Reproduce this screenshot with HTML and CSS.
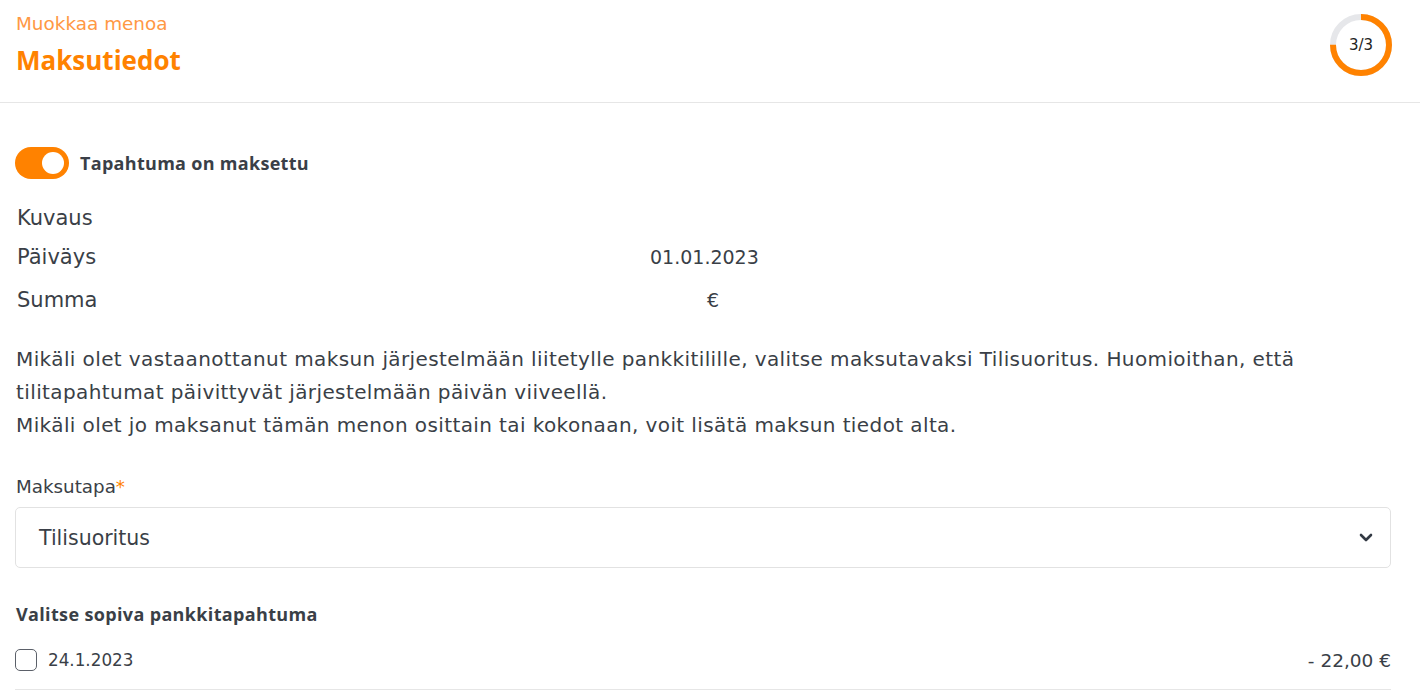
FILE: index.html
```html
<!DOCTYPE html>
<html lang="fi">
<head>
<meta charset="utf-8">
<title>Maksutiedot</title>
<link rel="stylesheet" href="styles.css">
</head>
<body>
<header class="page-head">
  <div class="titles">
    <div class="subtitle">Muokkaa menoa</div>
    <h1 class="title">Maksutiedot</h1>
  </div>
  <div class="steps">
    <svg class="ring" width="62" height="62" viewBox="0 0 62 62">
      <circle cx="31" cy="31" r="28" fill="none" stroke="#e6e7ea" stroke-width="6"/>
      <circle cx="31" cy="31" r="28" fill="none" stroke="#ff8200" stroke-width="6"
        stroke-dasharray="131.95 175.93" transform="rotate(-90 31 31)"/>
    </svg>
    <span class="steps-label">3/3</span>
  </div>
</header>

<main class="content">
  <label class="switch-row">
    <span class="switch"><span class="knob"></span></span>
    <span class="switch-label">Tapahtuma on maksettu</span>
  </label>

  <dl class="facts">
    <dt>Kuvaus</dt><dd></dd>
    <dt>Päiväys</dt><dd>01.01.2023</dd>
    <dt>Summa</dt><dd class="amount">€</dd>
  </dl>

  <p class="info">Mikäli olet vastaanottanut maksun järjestelmään liitetylle pankkitilille, valitse maksutavaksi Tilisuoritus. Huomioithan, että tilitapahtumat päivittyvät järjestelmään päivän viiveellä.<br>Mikäli olet jo maksanut tämän menon osittain tai kokonaan, voit lisätä maksun tiedot alta.</p>

  <div class="field">
    <div class="field-label">Maksutapa<span class="req">*</span></div>
    <div class="select">
      <span>Tilisuoritus</span>
      <svg class="chevron" width="14" height="9" viewBox="0 0 14 9"><path d="M2 2l5 5 5-5" fill="none" stroke="#333a44" stroke-width="2.6" stroke-linecap="round" stroke-linejoin="round"/></svg>
    </div>
  </div>

  <h2 class="section-title">Valitse sopiva pankkitapahtuma</h2>
  <div class="tx-row">
    <span class="checkbox"></span>
    <span class="tx-date">24.1.2023</span>
    <span class="tx-sum">- 22,00 €</span>
  </div>
</main>
</body>
</html>
```
FILE: styles.css
```css
* { box-sizing: border-box; }

body {
  margin: 0;
  font-family: "DejaVu Sans", "Open Sans", sans-serif;
  color: #3a3f47;
  background: #fff;
}

.page-head {
  display: flex;
  justify-content: space-between;
  align-items: flex-start;
  padding: 12px 28px 0 16px;
  height: 103px;
  border-bottom: 1px solid #e6e6e6;
}

.subtitle {
  color: #ff9844;
  font-size: 18.4px;
  line-height: 24px;
}

.title {
  margin: 8px 0 0;
  font-family: "Open Sans", sans-serif;
  color: #ff8200;
  font-size: 26px;
  font-weight: 700;
  line-height: 32px;
}

.steps {
  position: relative;
  width: 62px;
  height: 62px;
  margin-top: 2px;
}

.ring { display: block; }

.steps-label {
  position: absolute;
  inset: 0;
  display: flex;
  align-items: center;
  justify-content: center;
  font-size: 15px;
  color: #222;
}

.content {
  padding: 44px 29px 0 15px;
}

.switch-row {
  display: flex;
  align-items: center;
  gap: 11px;
}

.switch {
  width: 54px;
  height: 32px;
  border-radius: 16px;
  background: #ff8200;
  display: flex;
  align-items: center;
  justify-content: flex-end;
  padding-right: 5px;
}

.knob {
  width: 22px;
  height: 22px;
  border-radius: 50%;
  background: #fff;
}

.switch-label {
  font-family: "Open Sans", sans-serif;
  font-size: 18px;
  font-weight: 700;
  letter-spacing: 0.3px;
  color: #3a3f47;
}

.facts {
  display: grid;
  grid-template-columns: 633px 1fr;
  margin: 26px 0 0 2px;
  font-size: 21px;
  line-height: 26px;
}

.facts dt, .facts dd { margin: 0; }
.facts dd { font-size: 19px; }
.facts dt:nth-of-type(2), .facts dd:nth-of-type(2) { margin-top: 13px; }
.facts dt:nth-of-type(3), .facts dd:nth-of-type(3) { margin-top: 17px; }

.amount { padding-left: 57px; }

.info {
  margin: 30px 0 0 1px;
  font-size: 20px;
  letter-spacing: 0.4px;
  line-height: 33px;
}

.field { margin-top: 34px; }

.field-label {
  font-size: 18.3px;
  line-height: 22px;
  padding-left: 1px;
}

.req { color: #ff8200; }

.select {
  margin-top: 9px;
  height: 61px;
  border: 1px solid #e2e2e2;
  border-radius: 5px;
  display: flex;
  align-items: center;
  justify-content: space-between;
  padding: 0 17px 0 23px;
  font-size: 20.5px;
}

.section-title {
  margin: 34px 0 0 1px;
  font-family: "Open Sans", sans-serif;
  font-size: 18px;
  font-weight: 700;
  letter-spacing: 0.35px;
  line-height: 24px;
}

.tx-row {
  display: flex;
  align-items: center;
  margin-top: 10px;
  height: 54px;
  padding-bottom: 5px;
  border-bottom: 1px solid #e6e6e6;
}

.checkbox {
  width: 22px;
  height: 22px;
  border: 1.5px solid #5b6069;
  border-radius: 5px;
}

.tx-date {
  margin-left: 11px;
  font-size: 16.8px;
}

.tx-sum {
  margin-left: auto;
  font-size: 18.5px;
}
```
